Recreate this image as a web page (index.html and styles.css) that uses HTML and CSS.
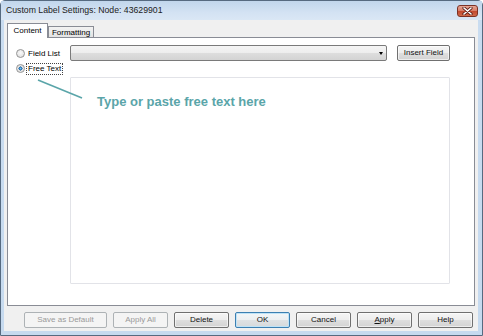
FILE: index.html
```html
<!DOCTYPE html>
<html>
<head>
<meta charset="utf-8">
<link rel="stylesheet" href="styles.css">
</head>
<body>
<div class="window">
  <div class="titlebar">
    <span class="title">Custom Label Settings: Node: 43629901</span>
    <div class="close">
      <svg width="11" height="8" viewBox="0 0 11 8"><path d="M2 1 L9 7 M9 1 L2 7" stroke="#5a1f18" stroke-width="3.2" stroke-linecap="round"/><path d="M2 1 L9 7 M9 1 L2 7" stroke="#fff" stroke-width="1.6" stroke-linecap="round"/></svg>
    </div>
  </div>
  <div class="body">
    <div class="tabs">
      <div class="tab active">Content</div>
      <div class="tab">Formatting</div>
    </div>
    <div class="panel">
      <div class="radios">
        <div class="radio"><span class="dot"></span><span class="rlabel">Field List</span></div>
        <div class="radio checked"><span class="dot"></span><span class="rlabel focus">Free Text</span></div>
      </div>
      <div class="main">
        <div class="toprow">
          <div class="combo"><span class="arrow"></span></div>
          <div class="btn insert">Insert Field</div>
        </div>
        <div class="textarea"><span class="hint">Type or paste free text here</span></div>
      </div>
      <svg class="callout" width="80" height="70" viewBox="0 0 80 70"><line x1="30" y1="42" x2="74" y2="60" stroke="#5aa5a9" stroke-width="1.6"/></svg>
    </div>
    <div class="buttons">
      <div class="btn disabled wide">Save as Default</div>
      <div class="btn disabled">Apply All</div>
      <div class="btn">Delete</div>
      <div class="btn default">OK</div>
      <div class="btn">Cancel</div>
      <div class="btn"><u>A</u>pply</div>
      <div class="btn">Help</div>
    </div>
  </div>
</div>
</body>
</html>
```
FILE: styles.css
```css
html, body {
  margin: 0;
  padding: 0;
}
body {
  width: 483px;
  height: 336px;
  overflow: hidden;
  font-family: "Liberation Sans", Arial, sans-serif;
  font-size: 8px;
  color: #000;
}
.window {
  box-sizing: border-box;
  width: 483px;
  height: 336px;
  border: 1px solid #566a80;
  border-radius: 5px 5px 0 0;
  background: linear-gradient(180deg, #bdd3ea 0px, #c9dcf0 20px, #c6daef 100%);
  display: flex;
  flex-direction: column;
}
.titlebar {
  height: 19px;
  display: flex;
  align-items: center;
  justify-content: space-between;
  padding: 0 4px 0 5px;
  background: linear-gradient(180deg, #c1d6ec 0%, #d3e2f3 60%, #dae7f5 100%);
}
.title {
  font-size: 8.7px;
  color: #222;
  margin-top: -1px;
}
.close {
  box-sizing: border-box;
  width: 21px;
  height: 12px;
  margin-top: 1px;
  border: 1px solid #7c3226;
  border-radius: 3px;
  background: linear-gradient(180deg, #e6a595 0%, #d8806b 45%, #c34a30 55%, #cf6a4a 100%);
  display: flex;
  align-items: center;
  justify-content: center;
}
.body {
  flex: 1;
  margin: 0 4px 4px 3px;
  background: #f0f0f0;
  padding: 3px 3px 3px 3px;
  display: flex;
  flex-direction: column;
}
.tabs {
  height: 14px;
  display: flex;
  align-items: flex-end;
  position: relative;
  z-index: 2;
}
.tab {
  box-sizing: border-box;
  height: 11px;
  width: 46px;
  border: 1px solid #898c95;
  border-bottom: none;
  background: linear-gradient(180deg, #f3f3f3, #e3e3e3);
  display: flex;
  align-items: center;
  justify-content: center;
  line-height: 10px;
  padding-top: 1px;
}
.tab.active {
  width: 41px;
  height: 15px;
  margin-bottom: -1px;
  background: #fff;
  padding-top: 0;
  padding-bottom: 1px;
}
.panel {
  box-sizing: border-box;
  height: 269px;
  border: 1px solid #898c95;
  background: #fff;
  padding: 7px 24px 21px 8px;
  display: flex;
  position: relative;
}
.radios {
  width: 54px;
  padding-top: 1px;
  display: flex;
  flex-direction: column;
}
.radio {
  height: 15px;
  display: flex;
  align-items: center;
  gap: 3px;
}
.dot {
  box-sizing: border-box;
  width: 9px;
  height: 9px;
  border-radius: 50%;
  border: 1px solid #949494;
  background: radial-gradient(circle at 50% 40%, #fafafa 0%, #e4e4e4 70%, #d4d4d4 100%);
  flex: none;
}
.radio.checked .dot {
  background: radial-gradient(circle at 50% 50%, #7cc8f0 0%, #2f7fc0 25%, #1f5f98 38%, #e2e2e2 44%, #ececec 100%);
}
.rlabel {
  line-height: 10px;
  padding: 0 1px;
  border: 1px dotted transparent;
  margin-left: -2px;
}
.rlabel.focus {
  border-color: #444;
}
.main {
  flex: 1;
  display: flex;
  flex-direction: column;
  gap: 16px;
}
.toprow {
  display: flex;
  gap: 10px;
  height: 16px;
}
.combo {
  box-sizing: border-box;
  flex: 1;
  height: 16px;
  border: 1px solid #7a7a7a;
  border-radius: 2px;
  background: linear-gradient(180deg, #f5f5f5 0%, #ededed 50%, #dedede 50%, #d3d3d3 100%);
  display: flex;
  justify-content: flex-end;
  align-items: center;
  padding-right: 3px;
}
.arrow {
  width: 0;
  height: 0;
  border-left: 2.5px solid transparent;
  border-right: 2.5px solid transparent;
  border-top: 3px solid #000;
}
.btn {
  box-sizing: border-box;
  width: 55px;
  height: 16px;
  border: 1px solid #707070;
  border-radius: 2px;
  background: linear-gradient(180deg, #f5f5f5 0%, #ededed 50%, #dfdfdf 50%, #d3d3d3 100%);
  box-shadow: inset 0 0 0 1px rgba(255,255,255,0.6);
  display: flex;
  align-items: center;
  justify-content: center;
  line-height: 10px;
  color: #111;
}
.btn.insert {
  width: 53px;
}
.textarea {
  flex: 1;
  border: 1px solid #e2e3e8;
  border-radius: 1px;
  background: #fff;
  padding: 16px 0 0 26px;
}
.hint {
  font-size: 13px;
  font-weight: bold;
  color: #5aa5a9;
  line-height: 15px;
}
.callout {
  position: absolute;
  left: 0;
  top: 0;
}
.buttons {
  margin-top: 6px;
  display: flex;
  justify-content: flex-end;
  gap: 6px;
  padding-right: 2px;
}
.btn.wide {
  width: 83px;
}
.btn.disabled {
  border-color: #adb2b5;
  background: #f4f4f4;
  box-shadow: none;
  color: #9a9a9a;
}
.btn.default {
  border-color: #3c7fb1;
  box-shadow: inset 0 0 0 1px #bfe3f7;
  background: linear-gradient(180deg, #f3f6f8 0%, #eceff1 50%, #dfe2e4 50%, #d6d9db 100%);
}
```
